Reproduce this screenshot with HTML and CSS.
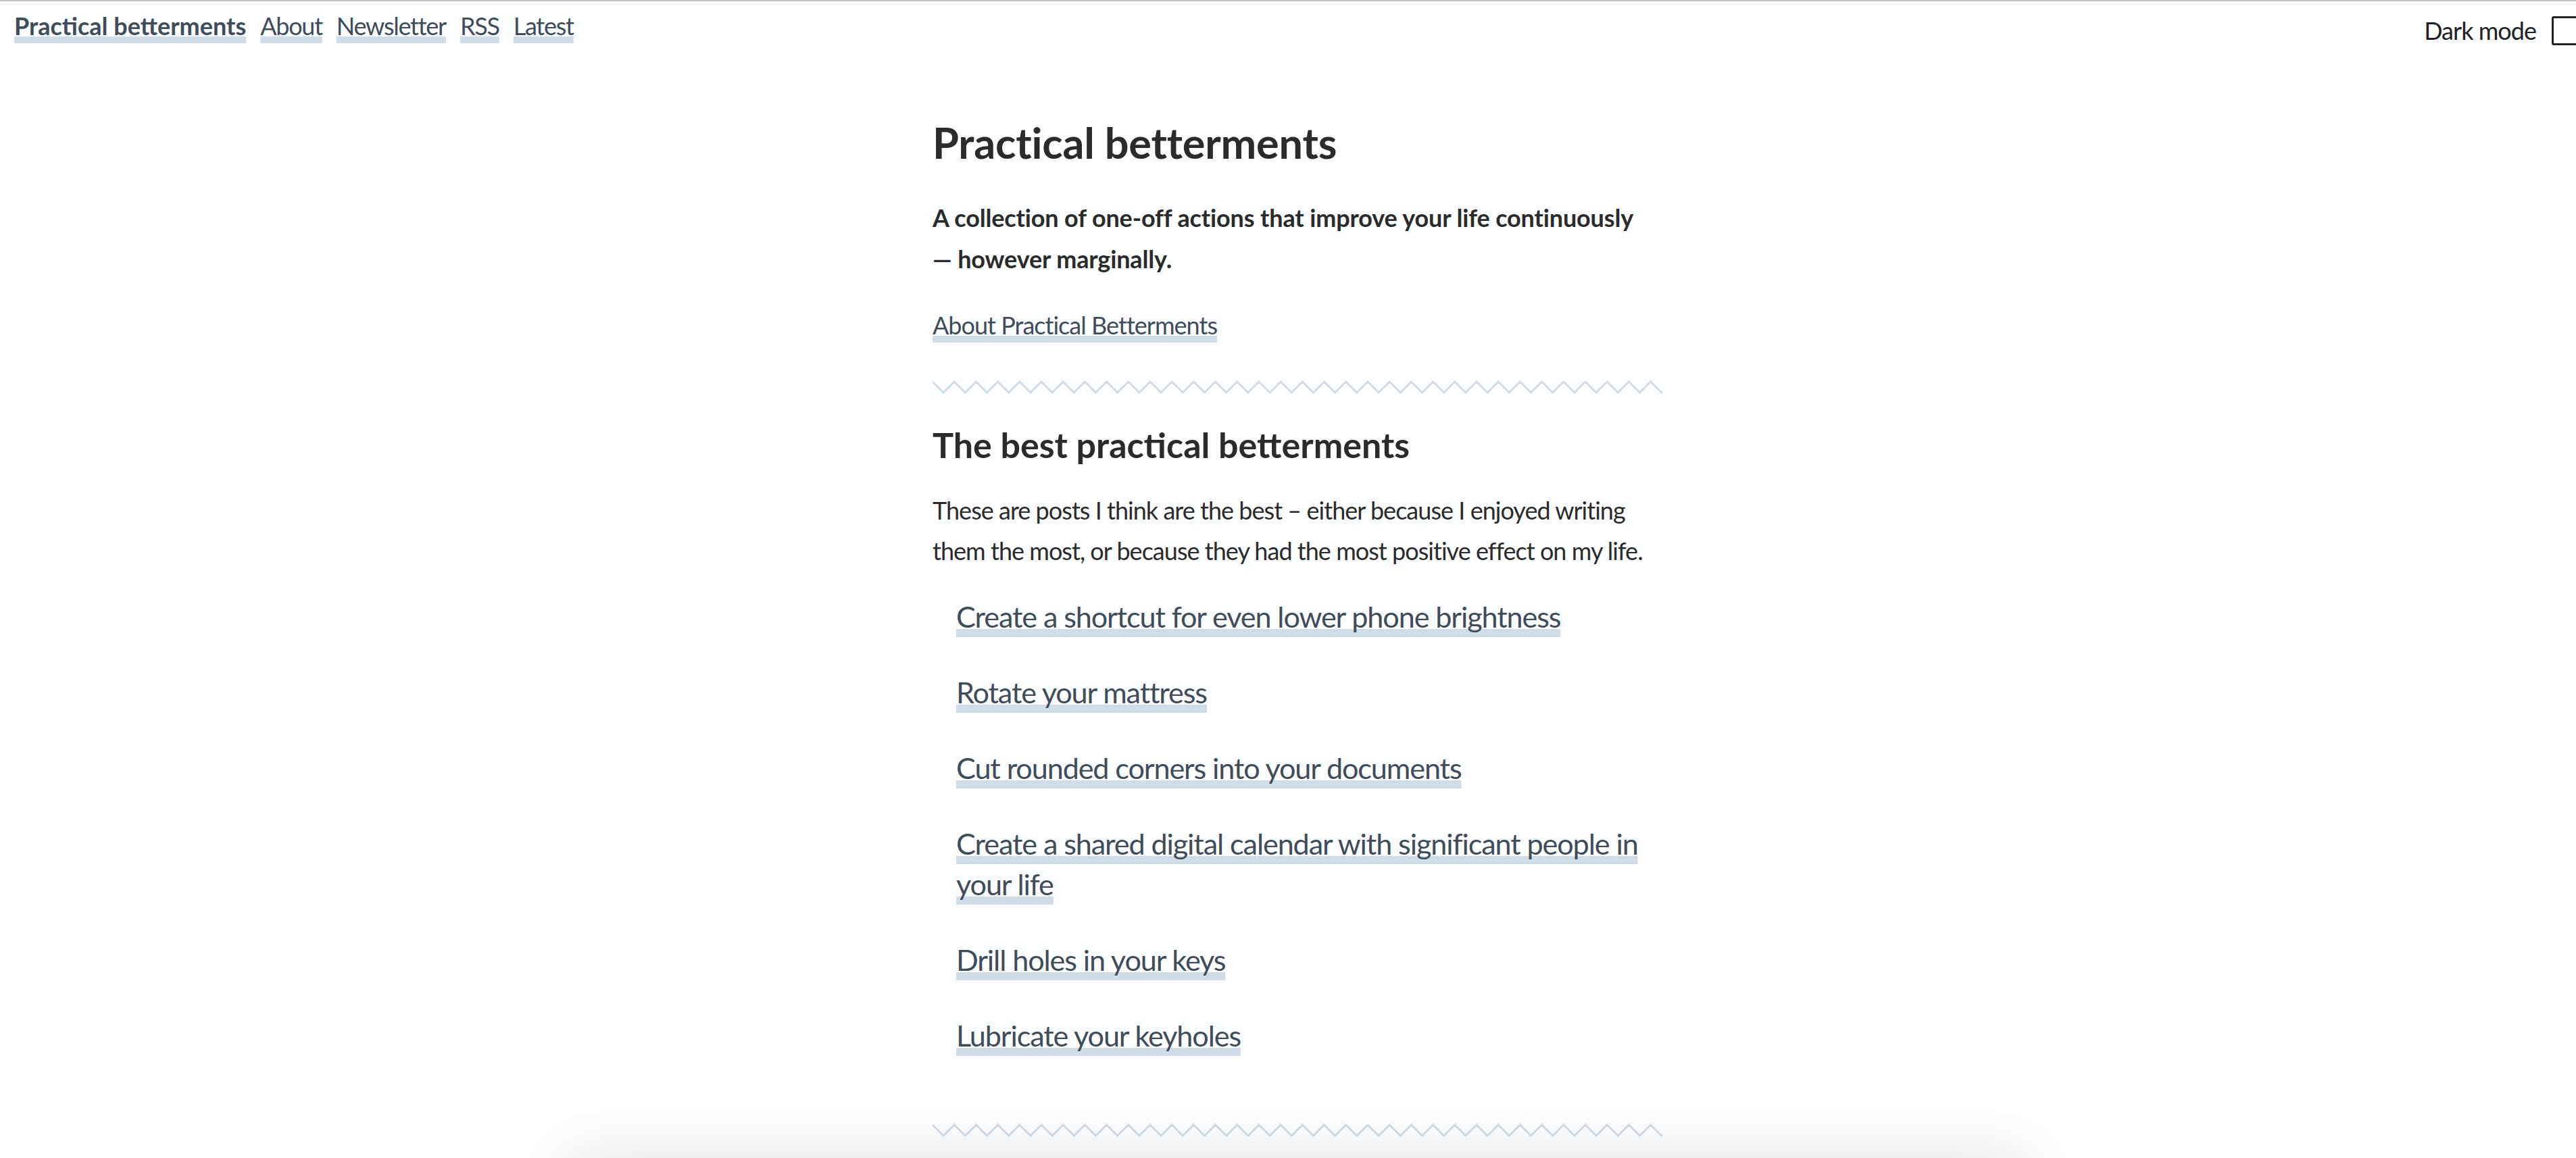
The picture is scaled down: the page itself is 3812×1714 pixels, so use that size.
FILE: index.html
```html
<!DOCTYPE html>
<html lang="en">
<head>
<meta charset="utf-8">
<title>Practical betterments</title>
<link rel="stylesheet" href="styles.css">
</head>
<body>
<div class="page">
  <header class="topbar">
    <nav class="nav">
      <a class="nav-link brand" href="#">Practical betterments</a>
      <a class="nav-link" href="#">About</a>
      <a class="nav-link" href="#">Newsletter</a>
      <a class="nav-link" href="#">RSS</a>
      <a class="nav-link" href="#">Latest</a>
    </nav>
    <label class="dark-toggle">
      <span class="dark-label">Dark mode</span>
      <span class="dark-box"></span>
    </label>
  </header>

  <main class="content">
    <h1 class="title">Practical betterments</h1>
    <p class="lede">A collection of one-off actions that improve your life continuously —&nbsp;however marginally.</p>
    <p class="about"><a class="link" href="#">About Practical Betterments</a></p>

    <svg class="zigzag" width="1080" height="20" viewBox="0 0 1080 20" aria-hidden="true">
      <path d="M0 2 l16.1 16 l16.1 -16 l16.1 16 l16.1 -16 l16.1 16 l16.1 -16 l16.1 16 l16.1 -16 l16.1 16 l16.1 -16 l16.1 16 l16.1 -16 l16.1 16 l16.1 -16 l16.1 16 l16.1 -16 l16.1 16 l16.1 -16 l16.1 16 l16.1 -16 l16.1 16 l16.1 -16 l16.1 16 l16.1 -16 l16.1 16 l16.1 -16 l16.1 16 l16.1 -16 l16.1 16 l16.1 -16 l16.1 16 l16.1 -16 l16.1 16 l16.1 -16 l16.1 16 l16.1 -16 l16.1 16 l16.1 -16 l16.1 16 l16.1 -16 l16.1 16 l16.1 -16 l16.1 16 l16.1 -16 l16.1 16 l16.1 -16 l16.1 16 l16.1 -16 l16.1 16 l16.1 -16 l16.1 16 l16.1 -16 l16.1 16 l16.1 -16 l16.1 16 l16.1 -16 l16.1 16 l16.1 -16 l16.1 16 l16.1 -16 l16.1 16 l16.1 -16 l16.1 16 l16.1 -16 l16.1 16 l16.1 -16 l16.1 16 l16.1 -16 l16.1 16 l16.1 -16 l16.1 16 l16.1 -16 l16.1 16 l16.1 -16 l16.1 16 l16.1 -16 l16.1 16 l16.1 -16 l16.1 16 l16.1 -16 l16.1 16 l16.1 -16 l16.1 16 l16.1 -16" fill="none" stroke="#d0dde9" stroke-width="3" stroke-linejoin="miter"/>
    </svg>

    <h2 class="section-title">The best practical betterments</h2>
    <p class="intro">These are posts I think are the best – either because I enjoyed writing them the most, or because they had the most positive effect on my life.</p>

    <ul class="best">
      <li><a class="link" href="#">Create a shortcut for even lower phone brightness</a></li>
      <li><a class="link" href="#">Rotate your mattress</a></li>
      <li><a class="link" href="#">Cut rounded corners into your documents</a></li>
      <li><a class="link" href="#">Create a shared digital calendar with significant people in your life</a></li>
      <li><a class="link" href="#">Drill holes in your keys</a></li>
      <li><a class="link" href="#">Lubricate your keyholes</a></li>
    </ul>

    <svg class="zigzag zigzag-end" width="1080" height="20" viewBox="0 0 1080 20" aria-hidden="true">
      <path d="M0 2 l16.1 16 l16.1 -16 l16.1 16 l16.1 -16 l16.1 16 l16.1 -16 l16.1 16 l16.1 -16 l16.1 16 l16.1 -16 l16.1 16 l16.1 -16 l16.1 16 l16.1 -16 l16.1 16 l16.1 -16 l16.1 16 l16.1 -16 l16.1 16 l16.1 -16 l16.1 16 l16.1 -16 l16.1 16 l16.1 -16 l16.1 16 l16.1 -16 l16.1 16 l16.1 -16 l16.1 16 l16.1 -16 l16.1 16 l16.1 -16 l16.1 16 l16.1 -16 l16.1 16 l16.1 -16 l16.1 16 l16.1 -16 l16.1 16 l16.1 -16 l16.1 16 l16.1 -16 l16.1 16 l16.1 -16 l16.1 16 l16.1 -16 l16.1 16 l16.1 -16 l16.1 16 l16.1 -16 l16.1 16 l16.1 -16 l16.1 16 l16.1 -16 l16.1 16 l16.1 -16 l16.1 16 l16.1 -16 l16.1 16 l16.1 -16 l16.1 16 l16.1 -16 l16.1 16 l16.1 -16 l16.1 16 l16.1 -16 l16.1 16 l16.1 -16 l16.1 16 l16.1 -16 l16.1 16 l16.1 -16 l16.1 16 l16.1 -16 l16.1 16 l16.1 -16 l16.1 16 l16.1 -16 l16.1 16 l16.1 -16 l16.1 16 l16.1 -16 l16.1 16 l16.1 -16 l16.1 16 l16.1 -16" fill="none" stroke="#d0dde9" stroke-width="3" stroke-linejoin="miter"/>
    </svg>
  </main>

  <section class="card"></section>
</div>
</body>
</html>
```

FILE: styles.css
```css
html, body {
  margin: 0;
  padding: 0;
  overflow-x: hidden;
  background: #fcfdfe;
}

body {
  font-family: "Lato", "Liberation Sans", sans-serif;
  color: #2b2b2b;
  border-top: 2px solid #c4c4c4;
}

.page {
  width: 3840px;
  display: flex;
  flex-direction: column;
  align-items: center;
}

.topbar {
  align-self: stretch;
  display: flex;
  justify-content: space-between;
  align-items: flex-start;
  padding: 6px 0 0 21px;
}

.nav {
  display: flex;
  gap: 21px;
  font-size: 36px;
  line-height: 61px;
  letter-spacing: -0.035em;
}

.nav-link,
.link {
  color: #414c5a;
  text-decoration-line: underline;
  text-decoration-color: #d0dde9;
  text-decoration-thickness: 0.28em;
  text-underline-offset: 0.05em;
  text-decoration-skip-ink: none;
  text-shadow: 2px 0 #fcfdfe, -2px 0 #fcfdfe, 0 2px #fcfdfe, 2px 2px #fcfdfe, -2px 2px #fcfdfe, 1px 1px #fcfdfe, -1px 1px #fcfdfe;
}

.brand {
  font-weight: 700;
  letter-spacing: 0;
}

.dark-toggle {
  display: flex;
  align-items: center;
  gap: 23px;
  margin-right: 21px;
  padding-top: 15px;
  font-size: 36px;
  letter-spacing: -0.027em;
  color: #222;
}

.dark-box {
  width: 37px;
  height: 37px;
  border: 3px solid #222;
  border-radius: 3px;
  background: #fff;
}

.content {
  width: 1080px;
  padding-top: 104px;
}

.title {
  margin: 0;
  font-size: 63px;
  line-height: 1.2;
  font-weight: 700;
  letter-spacing: -0.003em;
  color: #2b2b2b;
}

.lede {
  margin: 43px 0 0;
  font-size: 36px;
  line-height: 61px;
  font-weight: 700;
  letter-spacing: -0.004em;
}

.about {
  margin: 37px 0 0;
  font-size: 36px;
  line-height: 61px;
  letter-spacing: -0.027em;
}

.zigzag {
  display: block;
  margin-top: 51px;
}

.section-title {
  margin: 44px 0 0;
  font-size: 52px;
  line-height: 1.2;
  font-weight: 700;
  letter-spacing: 0;
}

.intro {
  margin: 36px 0 0;
  font-size: 36px;
  line-height: 60px;
  letter-spacing: -0.027em;
}

.best {
  list-style: none;
  margin: 37px 0 0;
  padding: 0 0 0 35px;
  display: flex;
  flex-direction: column;
  gap: 52px;
  font-size: 43.2px;
  line-height: 60px;
  letter-spacing: -0.026em;
}

.zigzag-end {
  margin-top: 101px;
}

.card {
  margin-top: 40px;
  width: 2140px;
  height: 600px;
  background: #fcfdfe;
  border-radius: 12px;
  box-shadow: 0 0 90px rgba(20, 30, 50, 0.14);
}
```
